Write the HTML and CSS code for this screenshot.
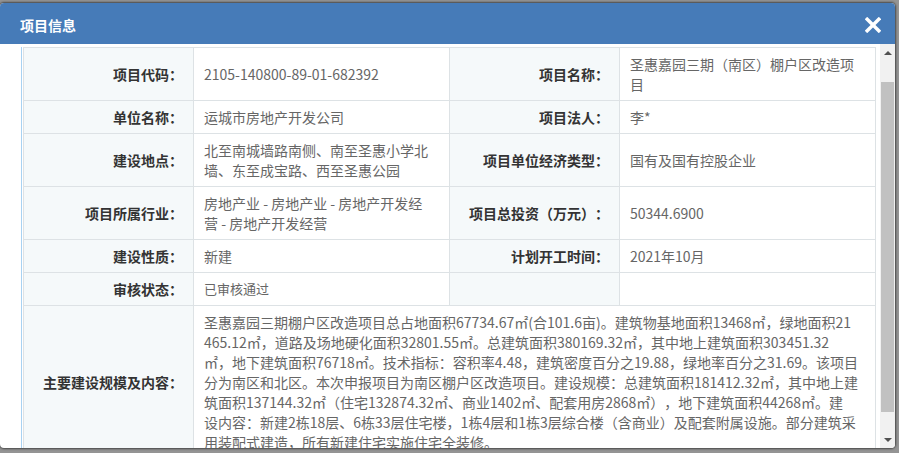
FILE: index.html
```html
<!DOCTYPE html>
<html lang="zh-CN">
<head>
<meta charset="utf-8">
<title>项目信息</title>
<link rel="stylesheet" href="styles.css">
</head>
<body>
<div class="backdrop">
  <div class="dialog">
    <div class="dialog-header">
      <span class="dialog-title">项目信息</span>
      <svg class="close" width="16" height="16" viewBox="0 0 16 16" aria-label="关闭">
        <line x1="2.2" y1="2.2" x2="13.8" y2="13.8" />
        <line x1="13.8" y1="2.2" x2="2.2" y2="13.8" />
      </svg>
    </div>
    <div class="dialog-body">
      <div class="scroll-content">
        <div class="panel">
          <table class="info">
            <colgroup>
              <col class="c-label">
              <col class="c-value">
              <col class="c-label">
              <col class="c-value">
            </colgroup>
            <tr>
              <th>项目代码：</th>
              <td>2105-140800-89-01-682392</td>
              <th>项目名称：</th>
              <td>圣惠嘉园三期（南区）棚户区改造项目</td>
            </tr>
            <tr>
              <th>单位名称：</th>
              <td>运城市房地产开发公司</td>
              <th>项目法人：</th>
              <td>李*</td>
            </tr>
            <tr>
              <th>建设地点：</th>
              <td>北至南城墙路南侧、南至圣惠小学北墙、东至成宝路、西至圣惠公园</td>
              <th>项目单位经济类型：</th>
              <td>国有及国有控股企业</td>
            </tr>
            <tr>
              <th>项目所属行业：</th>
              <td>房地产业 - 房地产业 - 房地产开发经<br>营 - 房地产开发经营</td>
              <th>项目总投资（万元）：</th>
              <td>50344.6900</td>
            </tr>
            <tr>
              <th>建设性质：</th>
              <td>新建</td>
              <th>计划开工时间：</th>
              <td>2021年10月</td>
            </tr>
            <tr>
              <th>审核状态：</th>
              <td class="small">已审核通过</td>
              <th></th>
              <td></td>
            </tr>
            <tr>
              <th>主要建设规模及内容：</th>
              <td colspan="3" class="long">圣惠嘉园三期棚户区改造项目总占地面积67734.67㎡(合101.6亩)。建筑物基地面积13468㎡，绿地面积21<br>465.12㎡，道路及场地硬化面积32801.55㎡。总建筑面积380169.32㎡，其中地上建筑面积303451.32<br>㎡，地下建筑面积76718㎡。技术指标：容积率4.48，建筑密度百分之19.88，绿地率百分之31.69。该项目<br>分为南区和北区。本次申报项目为南区棚户区改造项目。建设规模：总建筑面积181412.32㎡，其中地上建<br>筑面积137144.32㎡（住宅132874.32㎡、商业1402㎡、配套用房2868㎡），地下建筑面积44268㎡。建<br>设内容：新建2栋18层、6栋33层住宅楼，1栋4层和1栋3层综合楼（含商业）及配套附属设施。部分建筑采<br>用装配式建造，所有新建住宅实施住宅全装修。</td>
            </tr>
          </table>
        </div>
      </div>
      <div class="scrollbar">
        <div class="sb-btn"><span class="arrow-up"></span></div>
        <div class="sb-track"><div class="sb-thumb"></div></div>
        <div class="sb-btn"><span class="arrow-down"></span></div>
      </div>
    </div>
  </div>
</div>
</body>
</html>
```

FILE: styles.css
```css
html, body {
  margin: 0;
  padding: 0;
}

body {
  width: 899px;
  height: 453px;
  overflow: hidden;
  background: #949494;
  font-family: "Microsoft YaHei", "Noto Sans CJK SC", "Noto Sans", sans-serif;
  font-size: 14px;
  text-spacing-trim: space-all;
}

.backdrop {
  padding-top: 3px;
  height: 453px;
  box-sizing: border-box;
}

.dialog {
  width: 895px;
  height: 445px;
  background: #fff;
  border-radius: 4px;
  box-shadow: 0 0 2px 1px rgba(40, 40, 40, 0.7);
  overflow: hidden;
  display: flex;
  flex-direction: column;
}

.dialog-header {
  flex: 0 0 auto;
  height: 41px;
  box-sizing: border-box;
  padding: 3px 14px 0 20px;
  background: #467bb8;
  display: flex;
  align-items: center;
  justify-content: space-between;
}

.dialog-title {
  color: #fff;
  font-size: 14px;
  font-weight: bold;
  line-height: 20px;
}

.close {
  display: block;
  stroke: #fff;
  stroke-width: 3.4;
  stroke-linecap: square;
}

.dialog-body {
  flex: 1 1 auto;
  min-height: 0;
  display: flex;
}

.scroll-content {
  flex: 1 1 auto;
  min-width: 0;
  overflow: hidden;
  padding: 3px 4px 0 21px;
}

.panel {
  border-left: 1px solid #a8d2f2;
  padding-left: 1px;
}

.info {
  width: 853px;
  table-layout: fixed;
  border-collapse: collapse;
}

.c-label {
  width: 170px;
}

.c-value {
  width: 256px;
}

.info th,
.info td {
  border: 1px solid #dde2e5;
  padding: 6px 10px;
  line-height: 20px;
  vertical-align: middle;
}

.info th {
  background: #f5f9fa;
  color: #333;
  font-weight: bold;
  text-align: right;
  white-space: nowrap;
}

.info td {
  color: #666;
  text-align: left;
  word-break: break-all;
}

.info td.small {
  font-size: 13px;
}

.info td.long {
  white-space: nowrap;
}

.scrollbar {
  flex: 0 0 15px;
  background: #f1f1f1;
  display: flex;
  flex-direction: column;
}

.sb-btn {
  flex: 0 0 17px;
  display: flex;
  align-items: center;
  justify-content: center;
}

.arrow-up,
.arrow-down {
  width: 0;
  height: 0;
  border-left: 4px solid transparent;
  border-right: 4px solid transparent;
}

.arrow-up {
  border-bottom: 4px solid #505050;
}

.arrow-down {
  border-top: 4px solid #505050;
}

.sb-track {
  flex: 1 1 auto;
  padding: 21px 1px 0 1px;
}

.sb-thumb {
  height: 330px;
  background: #c1c1c1;
}
```
